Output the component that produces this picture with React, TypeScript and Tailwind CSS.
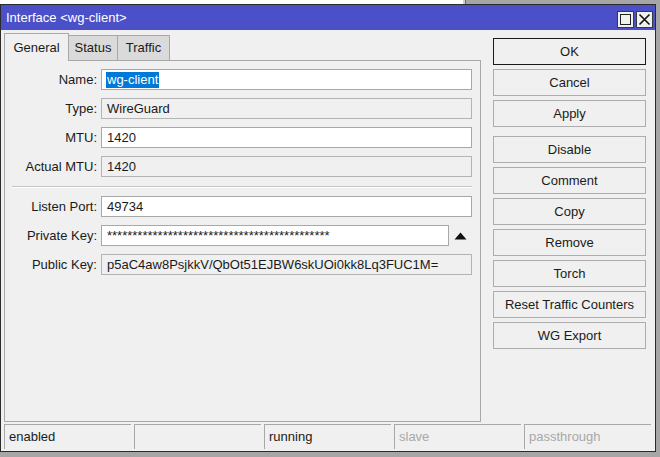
import React from "react";

function Field({ label, value, readOnly, selected }: { label: string; value: string; readOnly?: boolean; selected?: boolean }) {
  return (
    <div className="flex items-center h-[21px]">
      <div className="w-[92px] text-right shrink-0 whitespace-nowrap">{label}</div>
      <div
        className={
          "ml-[4px] w-[371px] h-[21px] border flex items-center pl-[5px] whitespace-nowrap overflow-hidden " +
          (readOnly ? "bg-[#f0f0f0] border-[#b4b4b4]" : "bg-white border-[#a8a8a8]")
        }
      >
        {selected ? (
          <span className="bg-[#0078d7] text-white px-[1px] -ml-[1px] leading-[16px]">{value}</span>
        ) : (
          value
        )}
      </div>
    </div>
  );
}

function Btn({ label, primary, className }: { label: string; primary?: boolean; className?: string }) {
  return (
    <div
      className={
        "w-[153px] h-[27px] flex items-center justify-center bg-[#f0f0f0] border " +
        (primary ? "border-[#1a1a1a]" : "border-[#adadad]") +
        " " +
        (className ?? "")
      }
    >
      {label}
    </div>
  );
}

export default function App() {
  const stars = "*".repeat(44);
  return (
    <div className="w-[660px] h-[457px] bg-[#a6a6a6] font-['Liberation_Sans',Arial,sans-serif] text-[13px] text-[#1a1a1a] overflow-hidden">
      <div className="flex h-[4px]">
        <div className="w-[463px] bg-white" />
        <div className="w-[2px] bg-[#cfcfcf]" />
        <div className="w-[1px] bg-[#6a6a6a]" />
        <div className="flex-1 bg-[#a6a6a6]" />
      </div>
      <div className="w-[656px] h-[448px] border border-[#2b2b2b] bg-[#f0f0f0] flex flex-col">
        {/* title bar */}
        <div className="h-[25px] bg-[#4b50c9] flex items-start shrink-0">
          <div className="text-white pl-[5px] leading-[26px] flex-1">Interface &lt;wg-client&gt;</div>
          <div className="flex gap-[2px] mt-[6px] mr-[2px]">
            <div className="w-[17px] h-[17px] bg-[#f0f0f0] border border-[#3a3a3a] flex items-center justify-center">
              <div className="w-[11px] h-[11px] border border-[#222]" />
            </div>
            <div className="w-[17px] h-[17px] bg-[#f0f0f0] border border-[#3a3a3a] flex items-center justify-center">
              <svg width="13" height="13" viewBox="0 0 13 13">
                <path d="M1.5 1.5 L11.5 11.5 M11.5 1.5 L1.5 11.5" stroke="#111" strokeWidth="1.6" />
              </svg>
            </div>
          </div>
        </div>

        {/* main */}
        <div className="flex h-[392px] shrink-0">
          <div className="ml-[3px] mt-[3px] w-[477px] flex flex-col">
            <div className="flex h-[27px] items-end">
              <div className="w-[65px] bg-[#f0f0f0] border-t border-l border-r border-[#a8a8a8] flex items-center justify-center relative z-10 -mb-[1px] h-[28px]">
                General
              </div>
              <div className="w-[49px] h-[25px] bg-[#dadada] border-t border-r border-[#a8a8a8] flex items-center justify-center">
                Status
              </div>
              <div className="w-[52px] h-[25px] bg-[#dadada] border-t border-r border-[#a8a8a8] flex items-center justify-center">
                Traffic
              </div>
            </div>
            <div className="h-[362px] border border-[#a8a8a8] flex flex-col pt-[8px]">
              <div className="flex flex-col gap-[8px]">
                <Field label="Name:" value="wg-client" selected />
                <Field label="Type:" value="WireGuard" readOnly />
                <Field label="MTU:" value="1420" />
                <Field label="Actual MTU:" value="1420" readOnly />
              </div>
              <div className="ml-[7px] w-[460px] h-[2px] border-t border-[#c4c4c4] border-b border-b-white mt-[9px] mb-[8px]" />
              <div className="flex flex-col gap-[8px]">
                <Field label="Listen Port:" value="49734" />
                <div className="flex items-center h-[21px]">
                  <div className="w-[92px] text-right shrink-0">Private Key:</div>
                  <div className="ml-[4px] w-[348px] h-[21px] border border-[#a8a8a8] bg-white flex items-center pl-[5px] overflow-hidden whitespace-nowrap">
                    {stars}
                  </div>
                  <div className="w-[23px] flex justify-center">
                    <svg width="13" height="8" viewBox="0 0 13 8">
                      <polygon points="6.5,0.5 12.5,7.5 0.5,7.5" fill="#111" />
                    </svg>
                  </div>
                </div>
                <Field label="Public Key:" value="p5aC4aw8PsjkkV/QbOt51EJBW6skUOi0kk8Lq3FUC1M=" readOnly />
              </div>
            </div>
          </div>

          <div className="ml-[12px] mt-[8px] flex flex-col">
            <div className="flex flex-col gap-[4px]">
              <Btn label="OK" primary />
              <Btn label="Cancel" />
              <Btn label="Apply" />
            </div>
            <div className="flex flex-col gap-[4px] mt-[9px]">
              <Btn label="Disable" />
              <Btn label="Comment" />
              <Btn label="Copy" />
              <Btn label="Remove" />
              <Btn label="Torch" />
              <Btn label="Reset Traffic Counters" />
              <Btn label="WG Export" />
            </div>
          </div>
        </div>

        {/* status bar */}
        <div className="ml-[3px] mt-[2px] w-[647px] h-[25px] grid grid-cols-5 gap-[3px]">
          <div className="border-t border-l border-[#a8a8a8] flex items-center pl-[4px]">enabled</div>
          <div className="border-t border-l border-[#a8a8a8]" />
          <div className="border-t border-l border-[#a8a8a8] flex items-center pl-[4px]">running</div>
          <div className="border-t border-l border-[#a8a8a8] flex items-center pl-[4px] text-[#a8a8a8]">slave</div>
          <div className="border-t border-l border-[#a8a8a8] flex items-center pl-[4px] text-[#a8a8a8]">passthrough</div>
        </div>
      </div>
    </div>
  );
}
